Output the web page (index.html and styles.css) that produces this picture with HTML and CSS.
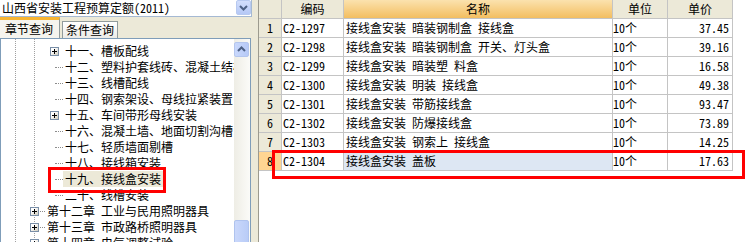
FILE: index.html
```html
<!DOCTYPE html>
<html lang="zh">
<head>
<meta charset="utf-8">
<link rel="stylesheet" href="styles.css">
</head>
<body>
<div class="app">
  <div class="left">
    <div class="combo">
      <span class="combo-text">山西省安装工程预算定额(2011)</span>
      <span class="combo-btn"><svg width="15" height="15" viewBox="0 0 15 15"><path d="M4 6 L7.5 9.5 L11 6" fill="none" stroke="#4D6185" stroke-width="2"/></svg></span>
    </div>
    <div class="tabs">
      <div class="tab active">章节查询</div>
      <div class="tab">条件查询</div>
    </div>
    <div class="treebox">
      <div class="tree">
        <div class="node l2"><span class="tw"><i class="pm"></i></span><span class="lbl">十一、槽板配线</span></div>
        <div class="node l2"><span class="tw"><i class="dots"></i></span><span class="lbl">十二、塑料护套线砖、混凝土结构</span></div>
        <div class="node l2"><span class="tw"><i class="dots"></i></span><span class="lbl">十三、线槽配线</span></div>
        <div class="node l2"><span class="tw"><i class="dots"></i></span><span class="lbl">十四、钢索架设、母线拉紧装置</span></div>
        <div class="node l2"><span class="tw"><i class="pm"></i></span><span class="lbl">十五、车间带形母线安装</span></div>
        <div class="node l2"><span class="tw"><i class="dots"></i></span><span class="lbl">十六、混凝土墙、地面切割沟槽</span></div>
        <div class="node l2"><span class="tw"><i class="dots"></i></span><span class="lbl">十七、轻质墙面剔槽</span></div>
        <div class="node l2"><span class="tw"><i class="dots"></i></span><span class="lbl">十八、接线箱安装</span></div>
        <div class="node l2"><span class="tw"><i class="dots"></i></span><span class="lbl sel">十九、接线盒安装</span></div>
        <div class="node l2"><span class="tw"><i class="dots"></i></span><span class="lbl">二十、线槽安装</span></div>
        <div class="node l1"><span class="tw"><i class="pm"></i><i class="dots short"></i></span><span class="lbl">第十二章&nbsp;工业与民用照明器具</span></div>
        <div class="node l1"><span class="tw"><i class="pm"></i><i class="dots short"></i></span><span class="lbl">第十三章&nbsp;市政路桥照明器具</span></div>
        <div class="node l1"><span class="tw"><i class="pm"></i><i class="dots short"></i></span><span class="lbl">第十四章&nbsp;电气调整试验</span></div>
      </div>
      <div class="vscroll">
        <div class="sb-btn"><svg width="13" height="13" viewBox="0 0 13 13"><path d="M3 8 L6.5 4.5 L10 8" fill="none" stroke="#4D6185" stroke-width="2"/></svg></div>
        <div class="sb-space"></div>
        <div class="sb-thumb"></div>
      </div>
    </div>
  </div>
  <div class="splitter"></div>
  <div class="gridpanel">
    <div class="grid">
      <div class="c h"></div>
      <div class="c h ctr">编码</div>
      <div class="c h ctr sorted">名称</div>
      <div class="c h ctr">单位</div>
      <div class="c h ctr">单价</div>

      <div class="c num">1</div><div class="c code">C2-1297</div><div class="c name">接线盒安装 暗装钢制盒 接线盒</div><div class="c unit">10个</div><div class="c price">37.45</div>
      <div class="c num">2</div><div class="c code">C2-1298</div><div class="c name">接线盒安装 暗装钢制盒 开关、灯头盒</div><div class="c unit">10个</div><div class="c price">39.16</div>
      <div class="c num">3</div><div class="c code">C2-1299</div><div class="c name">接线盒安装 暗装塑 料盒</div><div class="c unit">10个</div><div class="c price">16.58</div>
      <div class="c num">4</div><div class="c code">C2-1300</div><div class="c name">接线盒安装 明装 接线盒</div><div class="c unit">10个</div><div class="c price">49.38</div>
      <div class="c num">5</div><div class="c code">C2-1301</div><div class="c name">接线盒安装 带筋接线盒</div><div class="c unit">10个</div><div class="c price">93.47</div>
      <div class="c num">6</div><div class="c code">C2-1302</div><div class="c name">接线盒安装 防爆接线盒</div><div class="c unit">10个</div><div class="c price">73.89</div>
      <div class="c num">7</div><div class="c code">C2-1303</div><div class="c name">接线盒安装 钢索上 接线盒</div><div class="c unit">10个</div><div class="c price">14.25</div>
      <div class="c num cur">8</div><div class="c code">C2-1304</div><div class="c name cur-name">接线盒安装 盖板</div><div class="c unit">10个</div><div class="c price">17.63</div>
    </div>
  </div>
</div>
<div class="mark mark-tree"></div>
<div class="mark mark-row"></div>
</body>
</html>
```
FILE: styles.css
```css
* { box-sizing: border-box; }
html, body { margin: 0; padding: 0; overflow: hidden; }
body {
  background: #ECE9D8;
  font-family: "Noto Sans Mono CJK SC", "Noto Sans CJK SC", "Liberation Mono", monospace;
  font-size: 12px;
  color: #000;
}
.app { display: flex; height: 250px; }
.left { width: 252px; display: flex; flex-direction: column; flex: none; }
.combo {
  height: 18px; background: #fff; display: flex; align-items: flex-start;
  border-right: 1px solid #A5B9D3; border-bottom: 1px solid #A5B9D3;
}
.combo-text { flex: 1; padding-left: 2px; line-height: 16px; white-space: nowrap; }
.combo-btn {
  width: 15px; height: 15px; border-radius: 2px;
  background: linear-gradient(#D2DEFC, #B5C8F6);
  border: 1px solid #B7C9F0; display: flex;
}
.combo-btn svg { margin: -1px; }
.tabs { height: 23px; display: flex; align-items: flex-end; }
.tab {
  height: 17px; line-height: 15px; padding: 0 3px;
  border: 1px solid #919B9C; border-bottom: none;
  background: linear-gradient(#FFFFFF, #ECEBE6);
  margin-left: 2px; width: 56px; white-space: nowrap;
}
.tab.active {
  margin-left: 0; width: 60px; height: 21px; line-height: 18px;
  background: #F5F4EE; border-left: none;
  border-top: 3px solid #F8B532; padding-left: 5px;
}
.treebox {
  flex: 1; display: flex; background: #fff;
  border: 1px solid #7F9DB9; margin-right: 1px;
}
.tree {
  flex: 1; overflow: hidden; padding-top: 4px; white-space: nowrap;
  background:
    repeating-linear-gradient(to bottom, #A0A0A0 0 1px, transparent 1px 2px) 14px 0 / 1px 100% no-repeat,
    repeating-linear-gradient(to bottom, #A0A0A0 0 1px, transparent 1px 2px) 33px 0 / 1px 100% no-repeat,
    #fff;
}
.node { display: flex; align-items: center; height: 16px; }
.l2 { padding-left: 49px; }
.l1 { padding-left: 29px; }
.tw { display: flex; align-items: center; flex: none; height: 16px; }
.l2 .tw { width: 13px; }
.l1 .tw { width: 15px; }
.pm {
  display: block; width: 9px; height: 9px; flex: none; position: relative;
  border: 1px solid #7A8FA8;
  background: linear-gradient(135deg, #FFFFFF 30%, #CFCBBB);
}
.pm::before { content: ""; position: absolute; left: 1px; top: 3px; width: 5px; height: 1px; background: #000; }
.pm::after { content: ""; position: absolute; left: 3px; top: 1px; width: 1px; height: 5px; background: #000; }
.dots { display: block; margin-left: 5px; width: 8px; height: 0; border-top: 1px dotted #8C8C8C; }
.dots.short { margin-left: 1px; width: 5px; }
.lbl { padding: 0 2px; line-height: 16px; }
.lbl.sel { background: #ECE9D8; }
.vscroll {
  width: 16px; flex: none; display: flex; flex-direction: column;
  background: linear-gradient(to right, #EEEDE5, #FBFBF8);
}
.sb-btn {
  height: 15px; margin: 3px 1px 0 0; border-radius: 2px;
  background: linear-gradient(to right, #C9D8FC, #B7CAF7);
  border: 1px solid #B4C6EE; display: flex; align-items: center; justify-content: center;
}
.sb-space { flex: 1; }
.sb-thumb {
  height: 31px; margin: 0 1px 0 0; border-radius: 2px;
  background: linear-gradient(to right, #CAD8FB, #B9CCF7);
  border: 1px solid #AFC3EE;
}
.splitter { width: 6px; flex: none; background: #ECE9D8; }
.gridpanel { flex: 1; background: #fff; border-left: 1px solid #9C9A8E; }
.grid {
  display: grid;
  grid-template-columns: 23px 62px 269px 55px 65px;
  grid-auto-rows: 19px;
  width: 474px;
}
.c {
  border-right: 1px solid #C4C4C4; border-bottom: 1px solid #C4C4C4;
  line-height: 18px; white-space: nowrap; overflow: hidden;
}
.h { background: #ECE9D8; }
.ctr { text-align: center; }
.sorted { background: linear-gradient(#FBE2AE, #F3BE60); }
.num { background: #ECE9D8; text-align: center; }
.num.cur { background: #FFD592; }
.code { padding-left: 1px; }
.name { padding-left: 2px; }
.cur-name { background: #DDE7F3; }
.unit { padding-left: 0; }
.price { text-align: right; padding-right: 3px; }
.mark { position: absolute; border: 3px solid #FF0000; pointer-events: none; }
.mark-tree { left: 48px; top: 167px; width: 118px; height: 26px; }
.mark-row { left: 272px; top: 150px; width: 473px; height: 29px; }
```
